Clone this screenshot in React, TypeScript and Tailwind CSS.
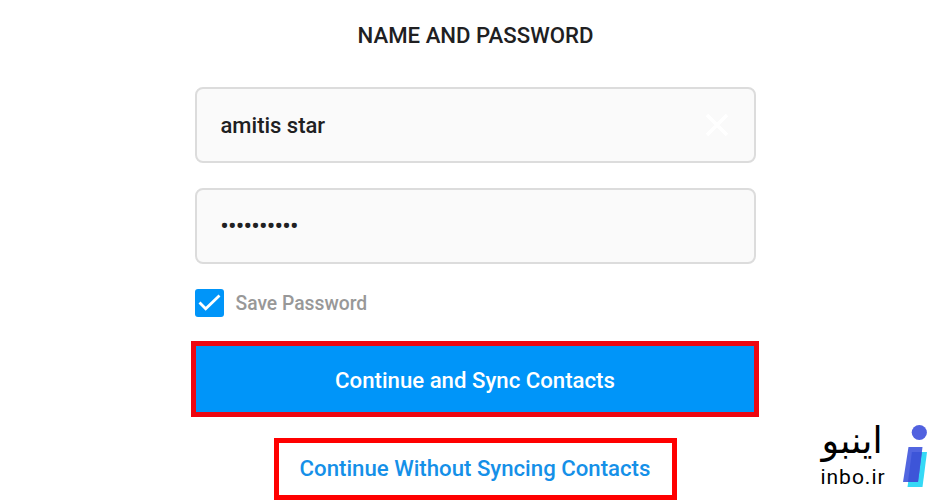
import { useState } from 'react';

const InboLogo = () => (
  <div className="absolute right-[21px] bottom-[10px] flex items-center gap-[17px]">
    <div className="flex w-[66px] flex-col items-center pt-[3px] font-normal text-black">
      <span
        dir="rtl"
        className="h-[39px] font-['DejaVu_Sans',sans-serif] text-[36.5px] leading-[33px] whitespace-nowrap"
      >
        اینبو
      </span>
      <span className="h-[27px] pl-[2px] font-[Roboto,sans-serif] text-[21px] leading-[28px] tracking-[1px] whitespace-nowrap">
        inbo.ir
      </span>
    </div>
    <svg width="27" height="68" viewBox="902 422 27 68" fill="none">
      <circle cx="919.3" cy="432.5" r="7.6" fill="#5161df" />
      <path d="M912.5 452h14.5l-4.5 35h-15z" fill="#35d9f6" />
      <path d="M908.5 447h14l-4.5 35h-15z" fill="#5266e0" />
      <path d="M911.9 452h10l-3.9 30h-10z" fill="#3d55d8" />
    </svg>
  </div>
);

const App = () => {
  const [username, setUsername] = useState('amitis star');
  const [savePassword, setSavePassword] = useState(true);

  return (
    <div className="relative flex h-[500px] w-[950px] flex-col items-center overflow-hidden bg-white font-[Roboto,sans-serif] font-medium text-[#202022]">
      <h1 className="mt-[20px] pl-px text-[22.2px] leading-[30px] font-medium whitespace-nowrap">
        NAME AND PASSWORD
      </h1>

      <div className="mt-[37px] flex h-[76px] w-[561px] items-center justify-between rounded-[8px] border-2 border-[#dcdcdc] bg-[#fafafa] pr-[25px] pl-[24px]">
        <span className="pt-[2px] text-[22px] leading-[30px] whitespace-nowrap">{username}</span>
        <button type="button" aria-label="Clear" onClick={() => setUsername('')}>
          <svg width="24" height="24" viewBox="0 0 24 24" stroke="#ffffff" strokeWidth="3.5">
            <path d="M2 2l20 20M22 2L2 22" />
          </svg>
        </button>
      </div>

      <div className="mt-[25px] flex h-[76px] w-[561px] items-center rounded-[8px] border-2 border-[#dcdcdc] bg-[#fafafa] px-[24px]">
        <span className="text-[22px] leading-[30px] font-bold tracking-[-0.15px] whitespace-nowrap">••••••••••</span>
      </div>

      <button
        type="button"
        onClick={() => setSavePassword(!savePassword)}
        className="mt-[25px] flex h-[28px] w-[561px] items-center gap-[12px]"
      >
        <span className="flex h-[28px] w-[29px] items-center justify-center rounded-[3px] bg-[#0095f9]">
          {savePassword && (
            <svg width="23" height="18" viewBox="0 0 23 18" fill="none" stroke="#ffffff" strokeWidth="2.8">
              <path d="M1.5 8.5l6.2 6.2L21.5 1.5" />
            </svg>
          )}
        </span>
        <span className="pt-[2px] text-[19.3px] leading-[28px] whitespace-nowrap text-[#989898]">
          Save Password
        </span>
      </button>

      <button
        type="button"
        className="mt-[24px] h-[76px] w-[568px] shrink-0 border-[5px] border-[#ed0610] bg-[#0095f9] pt-[2px] text-[22.2px] leading-[30px] whitespace-nowrap text-white"
      >
        Continue and Sync Contacts
      </button>

      <button
        type="button"
        className="mt-[21px] h-[62px] w-[403px] shrink-0 border-[5px] border-[#ff0000] bg-white pb-[2px] text-[22.2px] leading-[30px] whitespace-nowrap text-[#1590e8]"
      >
        Continue Without Syncing Contacts
      </button>

      <InboLogo />
    </div>
  );
};

export default App;
